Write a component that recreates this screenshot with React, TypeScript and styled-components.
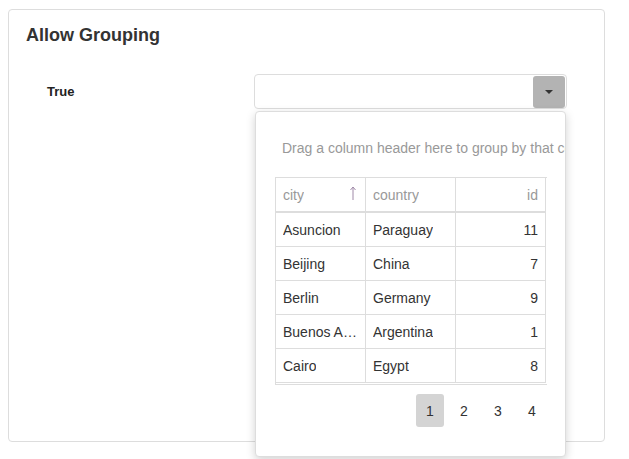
import React from 'react';
import styled, { createGlobalStyle } from 'styled-components';

const GlobalStyle = createGlobalStyle`
  body {
    margin: 8px;
    font-family: "Liberation Sans", Arial, sans-serif;
    background: #fff;
    color: #333;
  }
  #root {
    min-height: 451px;
  }
`;

const Card = styled.div`
  box-sizing: border-box;
  margin-top: 1px;
  width: 597px;
  height: 433px;
  border: 1px solid #ddd;
  border-radius: 4px;
  padding: 15px 17px;
`;

const Title = styled.h3`
  margin: 0;
  font-size: 18px;
  line-height: 21px;
  font-weight: bold;
  color: #333;
`;

const Row = styled.div`
  display: flex;
  align-items: center;
  margin-top: 28px;
  margin-left: 21px;
`;

const Label = styled.div`
  width: 207px;
  font-size: 13px;
  font-weight: bold;
  color: #222;
`;

const Combo = styled.div`
  position: relative;
  box-sizing: border-box;
  width: 313px;
  height: 35px;
  border: 1px solid #ddd;
  border-radius: 4px;
  display: flex;
  justify-content: flex-end;
  align-items: center;
  padding-right: 1px;
`;

const DropButton = styled.div`
  width: 32px;
  height: 32px;
  background: #b3b3b3;
  border-radius: 3px;
  display: flex;
  align-items: center;
  justify-content: center;
`;

const Caret = styled.span`
  width: 0;
  height: 0;
  border-left: 4px solid transparent;
  border-right: 4px solid transparent;
  border-top: 4px solid #333;
`;

const Dropdown = styled.div`
  position: absolute;
  top: calc(100% + 3px);
  left: 0;
  z-index: 10;
  box-sizing: border-box;
  width: 311px;
  height: 346px;
  background: #fff;
  border: 1px solid #ddd;
  border-radius: 4px;
  box-shadow: 0 3px 10px rgba(0, 0, 0, 0.18);
  padding: 20px 19px;
  overflow: hidden;
`;

const GroupPanel = styled.div`
  padding: 8px 7px 21px;
  font-size: 14px;
  line-height: 16px;
  color: #999;
  white-space: nowrap;
`;

const Grid = styled.div`
  width: 271px;
  display: grid;
  grid-template-columns: 90px 90px 90px;
  border-top: 1px solid #ddd;
  border-left: 1px solid #ddd;
  border-bottom: 1px solid #ddd;
  padding-bottom: 1px;
`;

const Cell = styled.div<{ $header?: boolean; $right?: boolean }>`
  box-sizing: border-box;
  height: ${p => (p.$header ? 35 : 34)}px;
  border-right: 1px solid #ddd;
  border-bottom: ${p => (p.$header ? 2 : 1)}px solid #ddd;
  padding: 0 7px;
  display: flex;
  align-items: center;
  justify-content: ${p => (p.$right ? 'flex-end' : 'space-between')};
  font-size: 14px;
  color: ${p => (p.$header ? '#999' : '#333')};
  white-space: nowrap;
  overflow: hidden;
`;

const CellText = styled.span`
  overflow: hidden;
  text-overflow: ellipsis;
`;

const SortArrow = styled.svg`
  width: 6px;
  height: 14px;
  flex: none;
  margin-top: -4px;
  margin-right: 2px;
`;

const Pager = styled.div`
  width: 271px;
  display: flex;
  justify-content: flex-end;
  gap: 6px;
  margin-top: 9px;
`;

const PageButton = styled.div<{ $active?: boolean }>`
  width: 28px;
  height: 33px;
  border-radius: 3px;
  background: ${p => (p.$active ? '#d4d4d4' : 'transparent')};
  display: flex;
  align-items: center;
  justify-content: center;
  font-size: 14px;
  color: #333;
`;

const rows = [
  { city: 'Asuncion', country: 'Paraguay', id: 11 },
  { city: 'Beijing', country: 'China', id: 7 },
  { city: 'Berlin', country: 'Germany', id: 9 },
  { city: 'Buenos Aires', country: 'Argentina', id: 1 },
  { city: 'Cairo', country: 'Egypt', id: 8 },
];

const App: React.FC = () => (
  <>
    <GlobalStyle />
    <Card>
      <Title>Allow Grouping</Title>
      <Row>
        <Label>True</Label>
        <Combo>
          <DropButton>
            <Caret />
          </DropButton>
          <Dropdown>
            <GroupPanel>Drag a column header here to group by that column</GroupPanel>
            <Grid>
              <Cell $header>
                <CellText>city</CellText>
                <SortArrow viewBox="0 0 6 14">
                  <path d="M3 1 L3 14 M0.5 4 L3 1 L5.5 4" stroke="#a08aa8" strokeWidth="1" fill="none" />
                </SortArrow>
              </Cell>
              <Cell $header>
                <CellText>country</CellText>
              </Cell>
              <Cell $header $right>
                <CellText>id</CellText>
              </Cell>
              {rows.map(r => (
                <React.Fragment key={r.id}>
                  <Cell>
                    <CellText>{r.city}</CellText>
                  </Cell>
                  <Cell>
                    <CellText>{r.country}</CellText>
                  </Cell>
                  <Cell $right>
                    <CellText>{r.id}</CellText>
                  </Cell>
                </React.Fragment>
              ))}
            </Grid>
            <Pager>
              {[1, 2, 3, 4].map(n => (
                <PageButton key={n} $active={n === 1}>
                  {n}
                </PageButton>
              ))}
            </Pager>
          </Dropdown>
        </Combo>
      </Row>
    </Card>
  </>
);

export default App;
